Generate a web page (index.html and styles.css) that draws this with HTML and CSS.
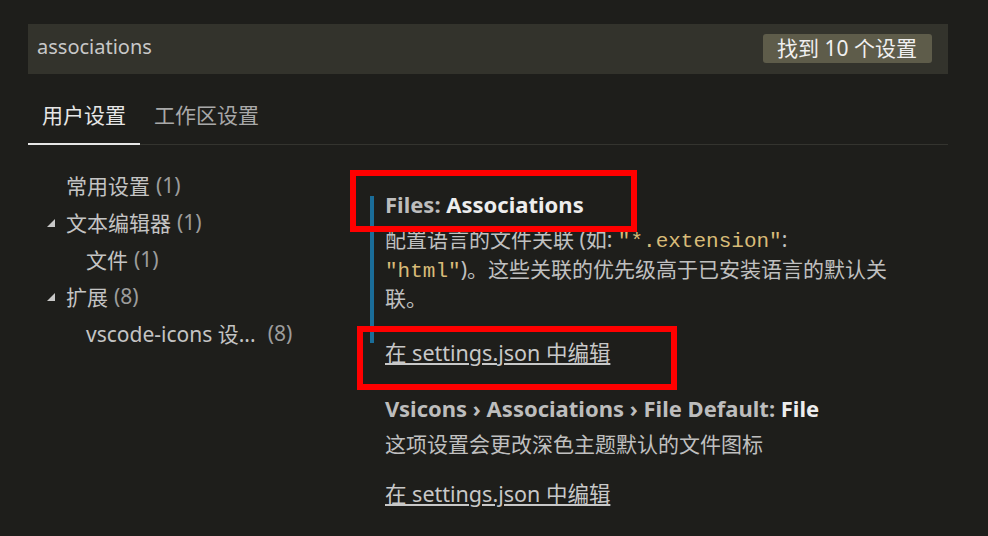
FILE: index.html
```html
<!DOCTYPE html>
<html lang="zh-CN">
<head>
<meta charset="utf-8">
<title>设置</title>
<link rel="stylesheet" href="styles.css">
</head>
<body>
<div class="page">
  <div class="search">
    <span class="query">associations</span>
    <span class="badge">找到 10 个设置</span>
  </div>
  <div class="tabs">
    <div class="tab active">用户设置</div>
    <div class="tab">工作区设置</div>
  </div>
  <div class="body">
    <nav class="toc">
      <div class="row lvl1"><span class="label">常用设置</span><span class="count">(1)</span></div>
      <div class="row lvl1 open"><svg class="twistie" viewBox="0 0 8 8"><polygon points="8,0 8,8 0,8"/></svg><span class="label">文本编辑器</span><span class="count">(1)</span></div>
      <div class="row lvl2"><span class="label">文件</span><span class="count">(1)</span></div>
      <div class="row lvl1 open"><svg class="twistie" viewBox="0 0 8 8"><polygon points="8,0 8,8 0,8"/></svg><span class="label">扩展</span><span class="count">(8)</span></div>
      <div class="row lvl2"><span class="label">vscode-icons 设...</span><span class="count wide">(8)</span></div>
    </nav>
    <main class="settings">
      <section class="setting modified">
        <div class="title"><span class="cat">Files: </span><span class="name">Associations</span></div>
        <div class="desc">配置语言的文件关联 (如: <code>"*.extension"</code>:<br><code>"html"</code>)。这些关联的优先级高于已安装语言的默认关<br>联。</div>
        <a class="edit" href="#">在 settings.json 中编辑</a>
      </section>
      <section class="setting">
        <div class="title"><span class="cat">Vsicons › Associations › File Default: </span><span class="name">File</span></div>
        <div class="desc">这项设置会更改深色主题默认的文件图标</div>
        <a class="edit" href="#">在 settings.json 中编辑</a>
      </section>
    </main>
  </div>
  <div class="mark mark-title"></div>
  <div class="mark mark-link"></div>
</div>
</body>
</html>
```
FILE: styles.css
```css
* { box-sizing: border-box; }
html, body {
  margin: 0;
  padding: 0;
  background: #1e1e1b;
}
body {
  width: 988px;
  height: 536px;
  overflow: hidden;
  font-family: "Noto Sans", "Noto Sans CJK SC", sans-serif;
  color: #bcbcbc;
}
.page {
  position: relative;
  padding: 24px 40px 0 28px;
}
.search {
  height: 50px;
  background: #33332c;
  display: flex;
  align-items: center;
  justify-content: space-between;
  padding: 0 16px 0 9px;
}
.query {
  font-size: 20px;
  color: #c8c8c8;
  position: relative;
  top: -3px;
}
.badge {
  background: #5e5c4a;
  color: #f0f0f0;
  border-radius: 3px;
  font-size: 21px;
  height: 29px;
  line-height: 29px;
  padding: 0 15px 0 14px;
  position: relative;
  top: -1px;
}
.tabs {
  display: flex;
  padding-top: 26px;
  border-bottom: 1px solid #34342f;
}
.tab {
  font-size: 21px;
  line-height: 30px;
  padding: 0 14px 13px 14px;
  color: #a9a9a9;
  margin-bottom: -1px;
  border-bottom: 2px solid transparent;
}
.tab.active {
  color: #e6e6e6;
  border-bottom-color: #e6e6e6;
}
.body {
  display: flex;
}
.toc {
  width: 342px;
  padding-top: 21px;
  flex: none;
}
.row {
  display: flex;
  align-items: center;
  height: 37px;
  font-size: 21px;
  color: #c4c4c4;
  white-space: nowrap;
}
.row.lvl1 { padding-left: 38px; }
.row.lvl1.open { padding-left: 19px; }
.row.lvl2 { padding-left: 58px; }
.twistie {
  width: 8px;
  height: 8px;
  fill: #c8c8c8;
  margin-right: 11px;
  position: relative;
  top: 1px;
}
.count {
  color: #9c9c9c;
  margin-left: 6px;
}
.count.wide { margin-left: 12px; }
.settings {
  flex: 1;
  padding-left: 15px;
  padding-top: 44px;
}
.setting {
  position: relative;
  margin-bottom: 25px;
}
.setting.modified::before {
  content: "";
  position: absolute;
  left: -15px;
  top: 7px;
  width: 4px;
  height: 147px;
  background: #1a6d99;
}
.title {
  font-size: 22px;
  line-height: 30px;
  font-weight: bold;
  white-space: nowrap;
}
.title .cat { color: #bdbdbd; }
.title .name { color: #ededed; }
.desc {
  font-size: 21px;
  line-height: 29.5px;
  margin-top: 6px;
  white-space: nowrap;
  color: #c0c0c0;
}
code {
  font-family: "Liberation Mono", "DejaVu Sans Mono", monospace;
  color: #d8bb78;
  font-size: 21px;
  line-height: 1;
}
.edit {
  display: inline-block;
  margin-top: 24px;
  font-size: 21.5px;
  line-height: 30px;
  color: #c8c8c8;
  text-decoration: underline;
}
.setting + .setting .desc { margin-top: 7px; }
.setting + .setting .edit { margin-top: 20px; }
.mark {
  position: absolute;
  border: 6px solid #ff0000;
}
.mark-title {
  left: 350px;
  top: 170px;
  width: 287px;
  height: 62px;
}
.mark-link {
  left: 357px;
  top: 326px;
  width: 320px;
  height: 64px;
}
```
